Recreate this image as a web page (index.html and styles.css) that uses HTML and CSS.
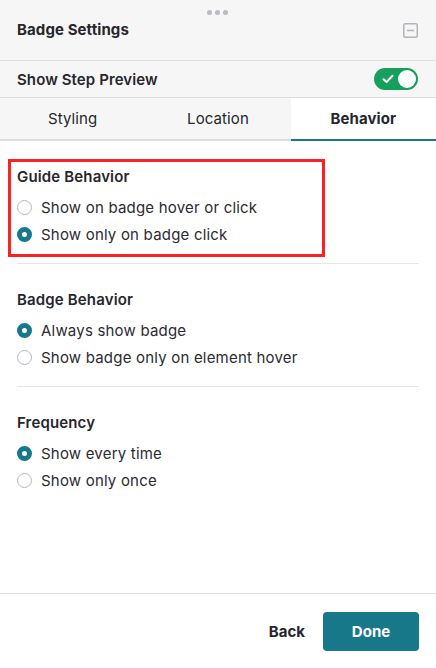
FILE: index.html
```html
<!DOCTYPE html>
<html lang="en">
<head>
  <meta charset="UTF-8" />
  <meta name="viewport" content="width=device-width, initial-scale=1.0"/>
  <title>Badge Settings</title>
  <link rel="stylesheet" href="styles.css">
</head>
<body>
  <div class="panel">
    <div class="header">
      <div class="drag-dots">
        <span></span><span></span><span></span>
      </div>
      <div class="title-row">
        <h1>Badge Settings</h1>
        <svg class="minimize" width="15" height="15" viewBox="0 0 15 15">
          <rect x="0.75" y="0.75" width="13.5" height="13.5" rx="1.5" fill="none" stroke="#b3b3bb" stroke-width="1.5"/>
          <line x1="4" y1="7.5" x2="11" y2="7.5" stroke="#b3b3bb" stroke-width="1.5"/>
        </svg>
      </div>
    </div>

    <div class="preview-row">
      <span>Show Step Preview</span>
      <div class="toggle">
        <svg width="12" height="10" viewBox="0 0 12 10">
          <path d="M1.5 5.2 L4.6 8 L10.5 1.8" fill="none" stroke="#fff" stroke-width="2" stroke-linecap="round" stroke-linejoin="round"/>
        </svg>
        <span class="knob"></span>
      </div>
    </div>

    <div class="tabs">
      <div class="tab">Styling</div>
      <div class="tab">Location</div>
      <div class="tab active">Behavior</div>
    </div>

    <div class="section highlighted">
      <h2>Guide Behavior</h2>
      <label class="radio"><span class="dot"></span>Show on badge hover or click</label>
      <label class="radio"><span class="dot checked"></span>Show only on badge click</label>
      <div class="highlight-box"></div>
    </div>

    <div class="section">
      <h2>Badge Behavior</h2>
      <label class="radio"><span class="dot checked"></span>Always show badge</label>
      <label class="radio"><span class="dot"></span>Show badge only on element hover</label>
    </div>

    <div class="section last">
      <h2>Frequency</h2>
      <label class="radio"><span class="dot checked"></span>Show every time</label>
      <label class="radio"><span class="dot"></span>Show only once</label>
    </div>

    <div class="spacer"></div>

    <div class="footer">
      <button class="back-button">Back</button>
      <button class="done-button">Done</button>
    </div>
  </div>
</body>
</html>
```

FILE: styles.css
```css
* {
  box-sizing: border-box;
}

body {
  margin: 0;
  background-color: #ffffff;
  font-family: 'Inter', 'Noto Sans', sans-serif;
  color: #26262c;
}

.panel {
  width: 436px;
  height: 668px;
  display: flex;
  flex-direction: column;
}

.header {
  height: 61px;
  background-color: #f6f6f6;
  border-bottom: 1px solid #dcdce2;
  padding: 0 18px 0 17px;
}

.drag-dots {
  display: flex;
  justify-content: center;
  gap: 3px;
  margin-top: 10px;
  height: 5px;
}

.drag-dots span {
  width: 5px;
  height: 5px;
  border-radius: 50%;
  background-color: #bbbbc3;
}

.title-row {
  display: flex;
  align-items: center;
  justify-content: space-between;
  margin-top: 5px;
  height: 20px;
}

h1 {
  margin: 0;
  font-size: 15px;
  font-weight: 700;
  line-height: 20px;
  letter-spacing: 0.1px;
}

.preview-row {
  height: 37px;
  background-color: #f6f6f6;
  border-bottom: 1px solid #dcdce2;
  display: flex;
  align-items: center;
  justify-content: space-between;
  padding: 0 18px 0 17px;
  font-size: 15px;
  font-weight: 600;
  letter-spacing: 0.1px;
}

.toggle {
  width: 44px;
  height: 22px;
  border-radius: 11px;
  background-color: #16a05c;
  display: flex;
  align-items: center;
  justify-content: space-between;
  padding: 0 2px 0 8px;
}

.knob {
  width: 18px;
  height: 18px;
  border-radius: 50%;
  background-color: #ffffff;
}

.tabs {
  display: flex;
  height: 43px;
}

.tab {
  flex: 1;
  display: flex;
  align-items: center;
  justify-content: center;
  background-color: #f6f6f6;
  border-bottom: 2px solid #dcdce2;
  font-size: 15px;
  letter-spacing: 0.1px;
}

.tab.active {
  background-color: #ffffff;
  border-bottom-color: #17788a;
  font-weight: 700;
}

.section {
  position: relative;
  margin: 0 17px;
  padding: 26px 0 15px;
  border-bottom: 1px solid #e6e6ea;
  display: flex;
  flex-direction: column;
}

.section.last {
  border-bottom: none;
}

h2 {
  margin: 0 0 7px;
  font-size: 15px;
  font-weight: 600;
  line-height: 20px;
  letter-spacing: 0.15px;
}

.radio {
  display: flex;
  align-items: center;
  gap: 9px;
  height: 27px;
  font-size: 15px;
  letter-spacing: 0.2px;
  color: #2b2b31;
}

.dot {
  width: 15px;
  height: 15px;
  border-radius: 50%;
  border: 1px solid #b6b6c0;
  background-color: #ffffff;
}

.dot.checked {
  border: 5px solid #17788a;
}

.highlight-box {
  position: absolute;
  top: 18px;
  left: -9px;
  width: 317px;
  height: 98px;
  border: 3px solid #fb2222;
}

.spacer {
  flex: 1;
}

.footer {
  height: 75px;
  border-top: 1px solid #dcdce2;
  display: flex;
  align-items: center;
  justify-content: flex-end;
  gap: 14px;
  padding-right: 17px;
}

button {
  font-family: 'Inter', 'Noto Sans', sans-serif;
  font-size: 15px;
  font-weight: 700;
  border: none;
  cursor: pointer;
}

.back-button {
  background: none;
  color: #26262c;
  padding: 8px 4px;
}

.done-button {
  width: 96px;
  height: 39px;
  border-radius: 4px;
  background-color: #17788a;
  color: #ffffff;
}
```
